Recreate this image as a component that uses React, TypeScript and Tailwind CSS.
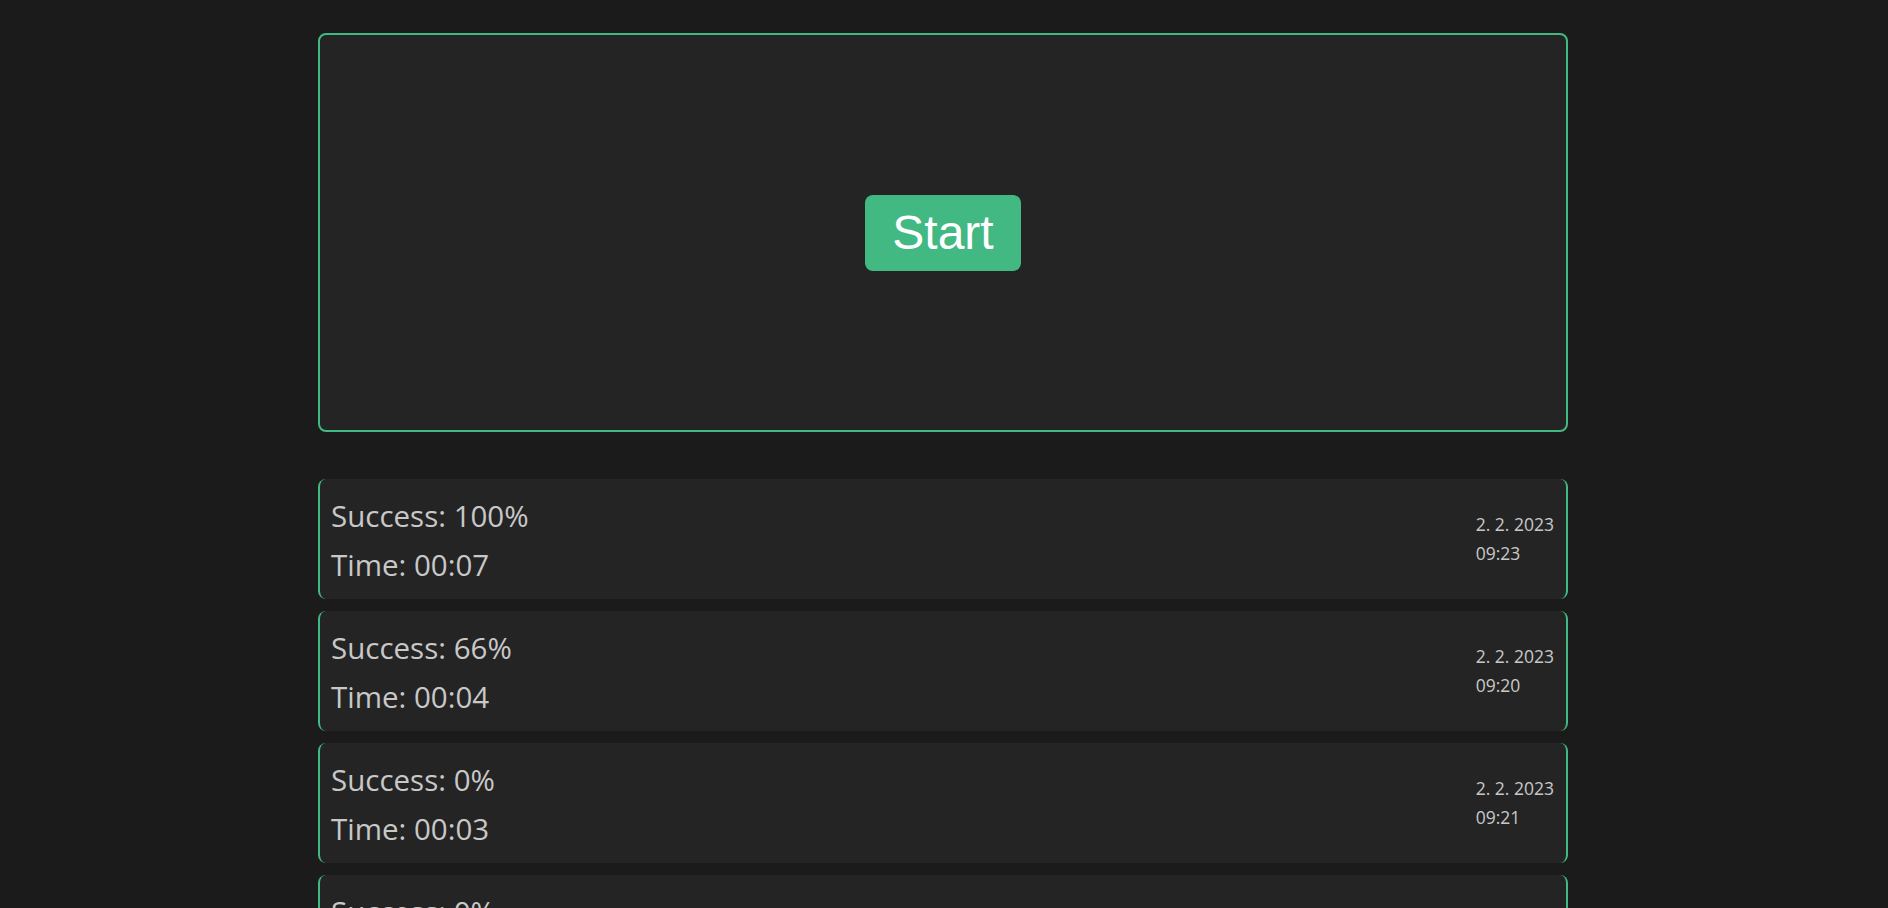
const results = [
  { success: 100, time: "00:07", date: "2. 2. 2023", clock: "09:23" },
  { success: 66, time: "00:04", date: "2. 2. 2023", clock: "09:20" },
  { success: 0, time: "00:03", date: "2. 2. 2023", clock: "09:21" },
  { success: 0, time: "00:02", date: "2. 2. 2023", clock: "09:19" },
];

export default function App() {
  return (
    <div className="min-h-screen bg-[#1b1b1b] pt-[33px] pb-10" style={{ fontFamily: "'Open Sans', 'Noto Sans', sans-serif" }}>
      <div className="w-[1250px] ml-[318px]">
        <div className="h-[399px] rounded-lg border-2 border-[#42b883] bg-[#242424] flex items-center justify-center">
          <button className="h-[76px] px-[27px] rounded-lg bg-[#42b883] text-white text-[48px] leading-none font-['Liberation_Sans',Arial,sans-serif]">
            Start
          </button>
        </div>

        <div className="mt-[47px] flex flex-col gap-3">
          {results.map((r, i) => (
            <div
              key={i}
              className="h-[120px] rounded-lg border-x-2 border-[#42b883] bg-[#242424] flex items-center justify-between pl-[11px] pr-[12px] text-[#c8c8c8]"
            >
              <div className="flex flex-col gap-[12px] text-[29.5px] leading-[37px] pt-[2px]">
                <span>Success: {r.success}%</span>
                <span>Time: {r.time}</span>
              </div>
              <div className="flex flex-col text-[17.5px] leading-[29px]">
                <span>{r.date}</span>
                <span>{r.clock}</span>
              </div>
            </div>
          ))}
        </div>
      </div>
    </div>
  );
}
